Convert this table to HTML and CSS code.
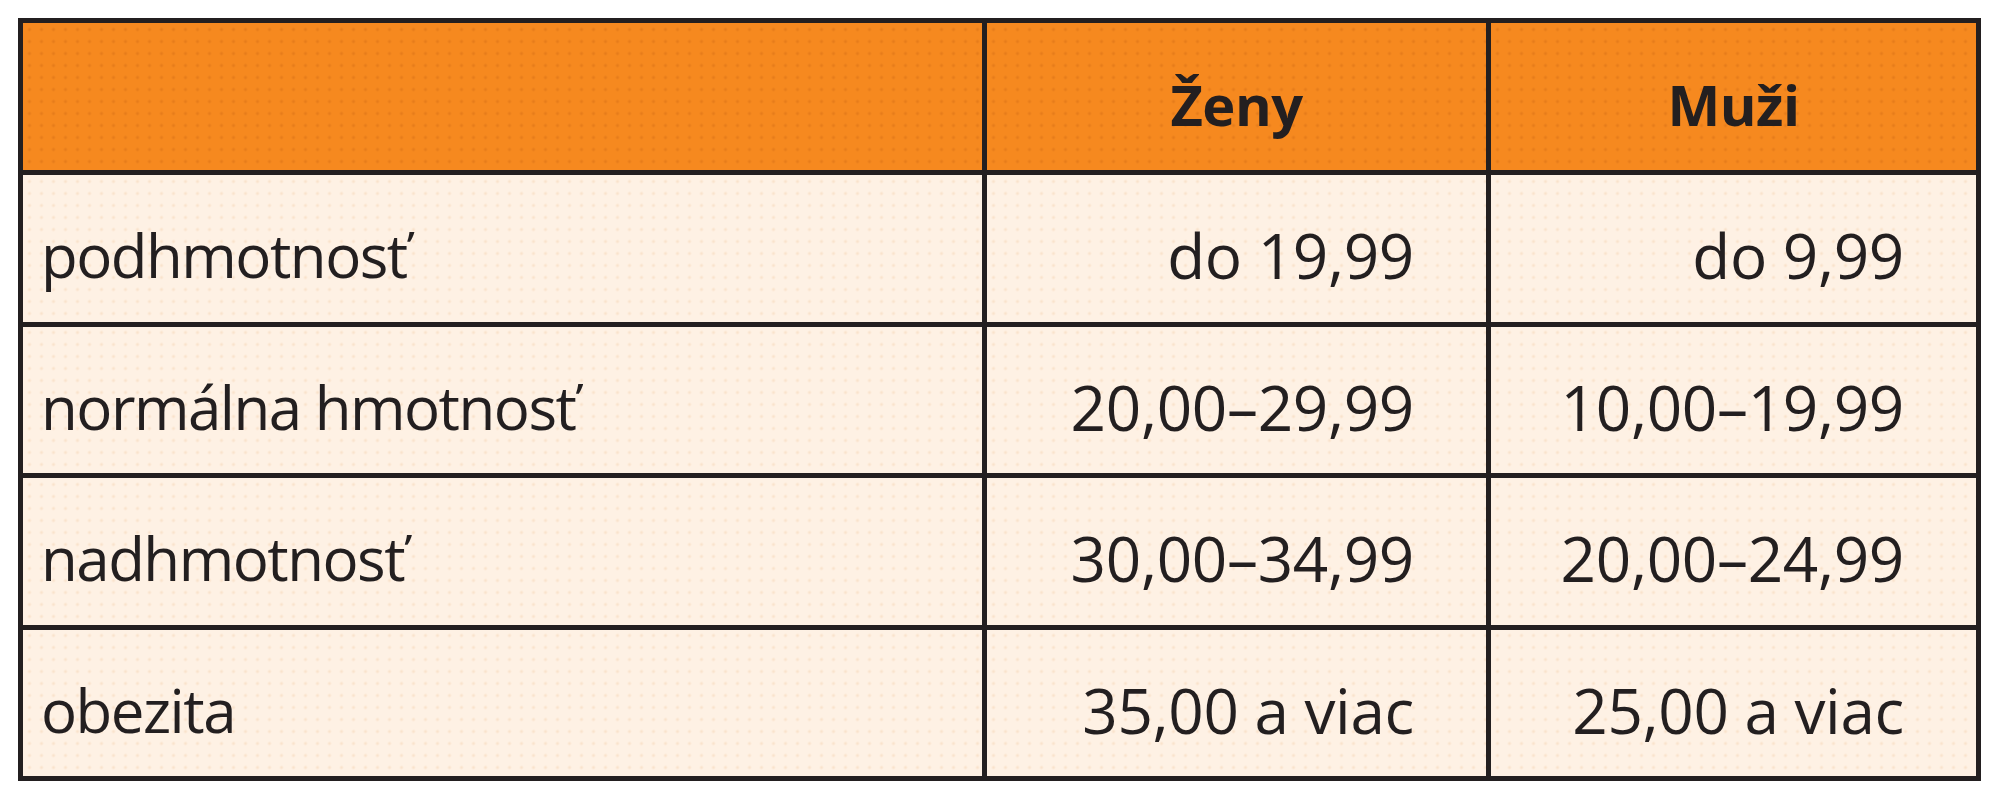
FILE: index.html
```html
<!DOCTYPE html>
<html lang="sk">
<head>
<meta charset="utf-8">
<title>Tabuľka</title>
<link rel="stylesheet" href="styles.css">
</head>
<body>
<table class="bmi">
  <colgroup>
    <col class="c-label">
    <col class="c-f">
    <col class="c-m">
  </colgroup>
  <thead>
    <tr class="head">
      <th></th>
      <th>Ženy</th>
      <th>Muži</th>
    </tr>
  </thead>
  <tbody>
    <tr><td class="lbl">podhmotnosť</td><td class="num">do 19,99</td><td class="num">do 9,99</td></tr>
    <tr><td class="lbl">normálna hmotnosť</td><td class="num">20,00–29,99</td><td class="num">10,00–19,99</td></tr>
    <tr><td class="lbl">nadhmotnosť</td><td class="num">30,00–34,99</td><td class="num">20,00–24,99</td></tr>
    <tr><td class="lbl">obezita</td><td class="num">35,00 a viac</td><td class="num">25,00 a viac</td></tr>
  </tbody>
</table>
</body>
</html>
```
FILE: styles.css
```css
html, body {
  margin: 0;
  padding: 0;
  background: #ffffff;
}
body {
  padding: 18px 0 0 18px;
  font-family: "Open Sans", "DejaVu Sans", sans-serif;
  color: #231f20;
}
.bmi {
  border-collapse: collapse;
  table-layout: fixed;
  border: 5px solid #231f20;
}
.c-label { width: 964px; }
.c-f { width: 504px; }
.c-m { width: 490px; }
.bmi th, .bmi td {
  border: 5px solid #231f20;
  padding: 0;
  line-height: 82px;
  vertical-align: top;
  white-space: nowrap;
}
.head th {
  height: 107px;
  padding-top: 40px;
  background-color: #f6891f;
  background-image: radial-gradient(circle, rgba(200, 100, 20, 0.35) 1.3px, transparent 1.8px);
  background-size: 12px 12px;
  font-weight: 700;
  font-size: 56px;
  text-align: center;
  letter-spacing: -0.5px;
}
.bmi tbody td {
  height: 107.5px;
  padding-top: 39px;
  background-color: #fef1e4;
  background-image: radial-gradient(circle, rgba(240, 200, 160, 0.35) 1.3px, transparent 1.8px);
  background-size: 12px 12px;
  font-weight: 400;
}
.bmi td.lbl {
  text-align: left;
  padding-left: 18px;
  font-size: 60px;
  letter-spacing: -1.5px;
}
.bmi td.num {
  text-align: right;
  padding-right: 72px;
  font-size: 62px;
  letter-spacing: -0.3px;
}
```
